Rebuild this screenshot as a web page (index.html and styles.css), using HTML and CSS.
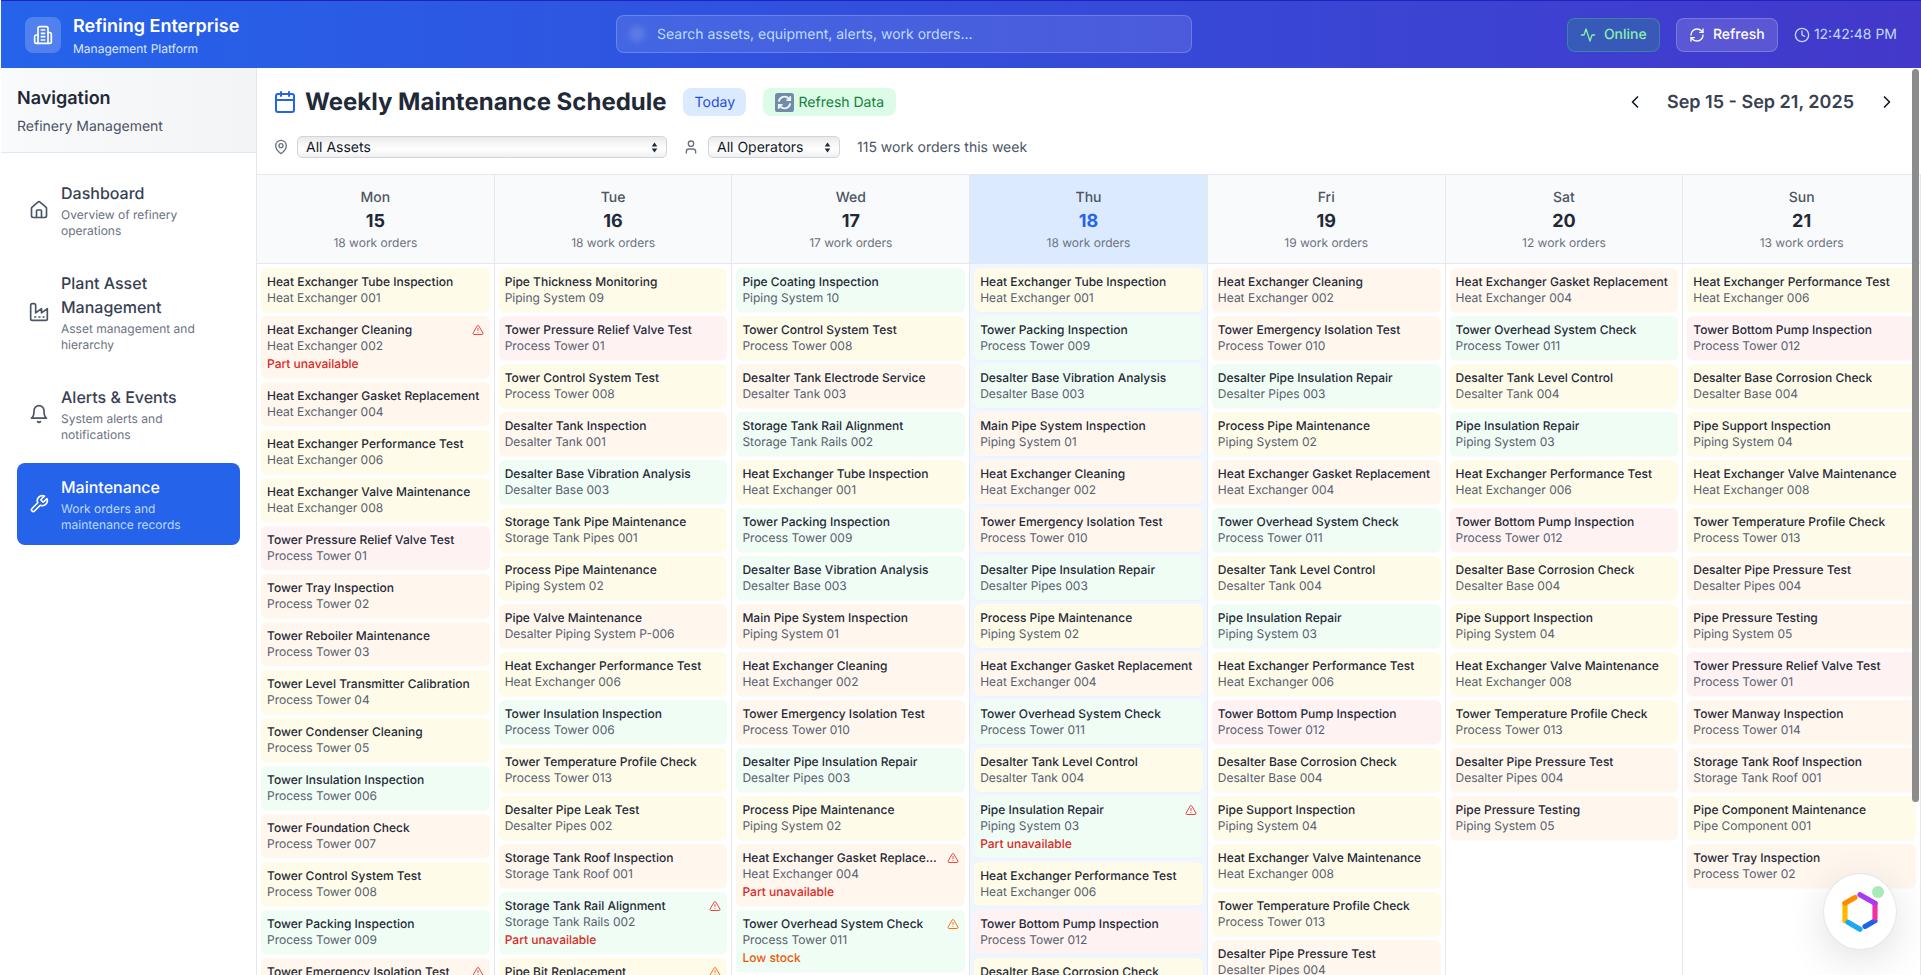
FILE: index.html
```html
<!DOCTYPE html>
<html lang="en">
<head>
<meta charset="utf-8">
<title>Weekly Maintenance Schedule</title>
<link rel="stylesheet" href="styles.css">
</head>
<body>
<svg class="defs" width="0" height="0" aria-hidden="true">
  <symbol id="i-alert" viewBox="0 0 24 24"><path d="m21.73 18-8-14a2 2 0 0 0-3.48 0l-8 14A2 2 0 0 0 4 21h16a2 2 0 0 0 1.73-3"/><path d="M12 9v4"/><path d="M12 17h.01"/></symbol>
  <symbol id="i-updown" viewBox="0 0 10 16"><path d="M5 1 9 6.5H1Z"/><path d="M5 15 1 9.5h8Z"/></symbol>
</svg>
<div class="app">
  <header class="topbar">
    <div class="brand">
      <div class="brand-icon">
        <svg class="ico i20" viewBox="0 0 24 24"><path d="M6 22V4a2 2 0 0 1 2-2h8a2 2 0 0 1 2 2v18Z"/><path d="M6 12H4a2 2 0 0 0-2 2v6a2 2 0 0 0 2 2h2"/><path d="M18 9h2a2 2 0 0 1 2 2v9a2 2 0 0 1-2 2h-2"/><path d="M10 6h4"/><path d="M10 10h4"/><path d="M10 14h4"/><path d="M10 18h4"/></svg>
      </div>
      <div>
        <div class="brand-title">Refining Enterprise</div>
        <div class="brand-sub">Management Platform</div>
      </div>
    </div>
    <div class="search">
      <span class="search-blob"></span>
      <span class="search-text">Search assets, equipment, alerts, work orders...</span>
    </div>
    <div class="top-actions">
      <div class="pill pill-online">
        <svg class="ico i16" viewBox="0 0 24 24"><path d="M22 12h-4l-3 9L9 3l-3 9H2"/></svg>
        <span>Online</span>
      </div>
      <div class="pill pill-refresh">
        <svg class="ico i16" viewBox="0 0 24 24"><path d="M3 12a9 9 0 0 1 9-9 9.75 9.75 0 0 1 6.74 2.74L21 8"/><path d="M21 3v5h-5"/><path d="M21 12a9 9 0 0 1-9 9 9.75 9.75 0 0 1-6.74-2.74L3 16"/><path d="M8 16H3v5"/></svg>
        <span>Refresh</span>
      </div>
      <div class="clock">
        <svg class="ico i16" viewBox="0 0 24 24"><circle cx="12" cy="12" r="10"/><polyline points="12 6 12 12 16 14"/></svg>
        <span>12:42:48 PM</span>
      </div>
    </div>
  </header>
  <div class="body">
    <aside class="sidebar">
      <div class="side-head">
        <div class="side-title">Navigation</div>
        <div class="side-sub">Refinery Management</div>
      </div>
      <nav class="nav">
        <a class="nav-item">
          <svg class="ico i20" viewBox="0 0 24 24"><path d="M15 21v-8a1 1 0 0 0-1-1h-4a1 1 0 0 0-1 1v8"/><path d="M3 10a2 2 0 0 1 .709-1.528l7-5.999a2 2 0 0 1 2.582 0l7 5.999A2 2 0 0 1 21 10v9a2 2 0 0 1-2 2H5a2 2 0 0 1-2-2z"/></svg>
          <div class="nav-text"><div class="nav-title">Dashboard</div><div class="nav-desc">Overview of refinery operations</div></div>
        </a>
        <a class="nav-item">
          <svg class="ico i20" viewBox="0 0 24 24"><path d="M2 20a2 2 0 0 0 2 2h16a2 2 0 0 0 2-2V8l-7 5V8l-7 5V4a2 2 0 0 0-2-2H4a2 2 0 0 0-2 2Z"/><path d="M17 18h1"/><path d="M12 18h1"/><path d="M7 18h1"/></svg>
          <div class="nav-text"><div class="nav-title">Plant Asset Management</div><div class="nav-desc">Asset management and hierarchy</div></div>
        </a>
        <a class="nav-item">
          <svg class="ico i20" viewBox="0 0 24 24"><path d="M6 8a6 6 0 0 1 12 0c0 7 3 9 3 9H3s3-2 3-9"/><path d="M10.3 21a1.94 1.94 0 0 0 3.4 0"/></svg>
          <div class="nav-text"><div class="nav-title">Alerts &amp; Events</div><div class="nav-desc">System alerts and notifications</div></div>
        </a>
        <a class="nav-item active">
          <svg class="ico i20" viewBox="0 0 24 24"><path d="M14.7 6.3a1 1 0 0 0 0 1.4l1.6 1.6a1 1 0 0 0 1.4 0l3.77-3.77a6 6 0 0 1-7.94 7.94l-6.91 6.91a2.12 2.12 0 0 1-3-3l6.91-6.91a6 6 0 0 1 7.94-7.94l-3.76 3.76z"/></svg>
          <div class="nav-text"><div class="nav-title">Maintenance</div><div class="nav-desc">Work orders and maintenance records</div></div>
        </a>
      </nav>
    </aside>
    <main class="main">
      <section class="toolbar">
        <div class="tool-row">
          <div class="tool-left">
            <svg class="ico cal" viewBox="0 0 24 24"><rect x="3" y="4" width="18" height="18" rx="2"/><path d="M16 2v4"/><path d="M8 2v4"/><path d="M3 10h18"/></svg>
            <h1 class="page-title">Weekly Maintenance Schedule</h1>
            <button class="chip chip-today">Today</button>
            <button class="chip chip-data">
              <svg class="emoji" viewBox="0 0 20 20"><rect width="20" height="20" rx="3" fill="#6f8ca8"/><path d="M4 9a6 6 0 0 1 10.5-3L16 7.5M16 3.5v4h-4M16 11a6 6 0 0 1-10.5 3L4 12.5M4 16.5v-4h4" fill="none" stroke="#f1f5f9" stroke-width="2"/></svg>
              <span>Refresh Data</span>
            </button>
          </div>
          <div class="week-nav">
            <svg class="ico chev" viewBox="0 0 24 24"><path d="m15 18-6-6 6-6"/></svg>
            <div class="week-label">Sep 15 - Sep 21, 2025</div>
            <svg class="ico chev" viewBox="0 0 24 24"><path d="m9 18 6-6-6-6"/></svg>
          </div>
        </div>
        <div class="filter-row">
          <svg class="ico filter-ico" viewBox="0 0 24 24"><path d="M20 10c0 6-8 12-8 12s-8-6-8-12a8 8 0 0 1 16 0Z"/><circle cx="12" cy="10" r="3"/></svg>
          <div class="select select-assets"><span>All Assets</span><svg class="updown"><use href="#i-updown"/></svg></div>
          <svg class="ico filter-ico op-ico" viewBox="0 0 24 24"><path d="M19 21v-2a4 4 0 0 0-4-4H9a4 4 0 0 0-4 4v2"/><circle cx="12" cy="7" r="4"/></svg>
          <div class="select select-ops"><span>All Operators</span><svg class="updown"><use href="#i-updown"/></svg></div>
          <div class="filter-count">115 work orders this week</div>
        </div>
      </section>

      <section class="week-head">
        <div class="day-head"><div class="day-name">Mon</div><div class="day-num">15</div><div class="day-count">18 work orders</div></div>
        <div class="day-head"><div class="day-name">Tue</div><div class="day-num">16</div><div class="day-count">18 work orders</div></div>
        <div class="day-head"><div class="day-name">Wed</div><div class="day-num">17</div><div class="day-count">17 work orders</div></div>
        <div class="day-head today"><div class="day-name">Thu</div><div class="day-num">18</div><div class="day-count">18 work orders</div></div>
        <div class="day-head"><div class="day-name">Fri</div><div class="day-num">19</div><div class="day-count">19 work orders</div></div>
        <div class="day-head"><div class="day-name">Sat</div><div class="day-num">20</div><div class="day-count">12 work orders</div></div>
        <div class="day-head"><div class="day-name">Sun</div><div class="day-num">21</div><div class="day-count">13 work orders</div></div>
      </section>

      <section class="week-grid">
        <div class="day-col">
          <div class="card y"><div class="card-title">Heat Exchanger Tube Inspection</div><div class="card-sub">Heat Exchanger 001</div></div>
          <div class="card o"><div class="card-top"><div class="card-title">Heat Exchanger Cleaning</div><svg class="warn red"><use href="#i-alert"/></svg></div><div class="card-sub">Heat Exchanger 002</div><div class="card-note red">Part unavailable</div></div>
          <div class="card o"><div class="card-title">Heat Exchanger Gasket Replacement</div><div class="card-sub">Heat Exchanger 004</div></div>
          <div class="card y"><div class="card-title">Heat Exchanger Performance Test</div><div class="card-sub">Heat Exchanger 006</div></div>
          <div class="card y"><div class="card-title">Heat Exchanger Valve Maintenance</div><div class="card-sub">Heat Exchanger 008</div></div>
          <div class="card r"><div class="card-title">Tower Pressure Relief Valve Test</div><div class="card-sub">Process Tower 01</div></div>
          <div class="card o"><div class="card-title">Tower Tray Inspection</div><div class="card-sub">Process Tower 02</div></div>
          <div class="card o"><div class="card-title">Tower Reboiler Maintenance</div><div class="card-sub">Process Tower 03</div></div>
          <div class="card y"><div class="card-title">Tower Level Transmitter Calibration</div><div class="card-sub">Process Tower 04</div></div>
          <div class="card y"><div class="card-title">Tower Condenser Cleaning</div><div class="card-sub">Process Tower 05</div></div>
          <div class="card g"><div class="card-title">Tower Insulation Inspection</div><div class="card-sub">Process Tower 006</div></div>
          <div class="card o"><div class="card-title">Tower Foundation Check</div><div class="card-sub">Process Tower 007</div></div>
          <div class="card y"><div class="card-title">Tower Control System Test</div><div class="card-sub">Process Tower 008</div></div>
          <div class="card g"><div class="card-title">Tower Packing Inspection</div><div class="card-sub">Process Tower 009</div></div>
          <div class="card o"><div class="card-top"><div class="card-title">Tower Emergency Isolation Test</div><svg class="warn red"><use href="#i-alert"/></svg></div></div>
        </div>
        <div class="day-col">
          <div class="card y"><div class="card-title">Pipe Thickness Monitoring</div><div class="card-sub">Piping System 09</div></div>
          <div class="card r"><div class="card-title">Tower Pressure Relief Valve Test</div><div class="card-sub">Process Tower 01</div></div>
          <div class="card y"><div class="card-title">Tower Control System Test</div><div class="card-sub">Process Tower 008</div></div>
          <div class="card o"><div class="card-title">Desalter Tank Inspection</div><div class="card-sub">Desalter Tank 001</div></div>
          <div class="card g"><div class="card-title">Desalter Base Vibration Analysis</div><div class="card-sub">Desalter Base 003</div></div>
          <div class="card y"><div class="card-title">Storage Tank Pipe Maintenance</div><div class="card-sub">Storage Tank Pipes 001</div></div>
          <div class="card y"><div class="card-title">Process Pipe Maintenance</div><div class="card-sub">Piping System 02</div></div>
          <div class="card o"><div class="card-title">Pipe Valve Maintenance</div><div class="card-sub">Desalter Piping System P-006</div></div>
          <div class="card y"><div class="card-title">Heat Exchanger Performance Test</div><div class="card-sub">Heat Exchanger 006</div></div>
          <div class="card g"><div class="card-title">Tower Insulation Inspection</div><div class="card-sub">Process Tower 006</div></div>
          <div class="card y"><div class="card-title">Tower Temperature Profile Check</div><div class="card-sub">Process Tower 013</div></div>
          <div class="card y"><div class="card-title">Desalter Pipe Leak Test</div><div class="card-sub">Desalter Pipes 002</div></div>
          <div class="card o"><div class="card-title">Storage Tank Roof Inspection</div><div class="card-sub">Storage Tank Roof 001</div></div>
          <div class="card g"><div class="card-top"><div class="card-title">Storage Tank Rail Alignment</div><svg class="warn red"><use href="#i-alert"/></svg></div><div class="card-sub">Storage Tank Rails 002</div><div class="card-note red">Part unavailable</div></div>
          <div class="card y"><div class="card-top"><div class="card-title">Pipe Bit Replacement</div><svg class="warn amber"><use href="#i-alert"/></svg></div></div>
        </div>
        <div class="day-col">
          <div class="card g"><div class="card-title">Pipe Coating Inspection</div><div class="card-sub">Piping System 10</div></div>
          <div class="card y"><div class="card-title">Tower Control System Test</div><div class="card-sub">Process Tower 008</div></div>
          <div class="card o"><div class="card-title">Desalter Tank Electrode Service</div><div class="card-sub">Desalter Tank 003</div></div>
          <div class="card g"><div class="card-title">Storage Tank Rail Alignment</div><div class="card-sub">Storage Tank Rails 002</div></div>
          <div class="card y"><div class="card-title">Heat Exchanger Tube Inspection</div><div class="card-sub">Heat Exchanger 001</div></div>
          <div class="card g"><div class="card-title">Tower Packing Inspection</div><div class="card-sub">Process Tower 009</div></div>
          <div class="card g"><div class="card-title">Desalter Base Vibration Analysis</div><div class="card-sub">Desalter Base 003</div></div>
          <div class="card o"><div class="card-title">Main Pipe System Inspection</div><div class="card-sub">Piping System 01</div></div>
          <div class="card o"><div class="card-title">Heat Exchanger Cleaning</div><div class="card-sub">Heat Exchanger 002</div></div>
          <div class="card o"><div class="card-title">Tower Emergency Isolation Test</div><div class="card-sub">Process Tower 010</div></div>
          <div class="card g"><div class="card-title">Desalter Pipe Insulation Repair</div><div class="card-sub">Desalter Pipes 003</div></div>
          <div class="card y"><div class="card-title">Process Pipe Maintenance</div><div class="card-sub">Piping System 02</div></div>
          <div class="card o"><div class="card-top"><div class="card-title">Heat Exchanger Gasket Replacement</div><svg class="warn red"><use href="#i-alert"/></svg></div><div class="card-sub">Heat Exchanger 004</div><div class="card-note red">Part unavailable</div></div>
          <div class="card g"><div class="card-top"><div class="card-title">Tower Overhead System Check</div><svg class="warn amber"><use href="#i-alert"/></svg></div><div class="card-sub">Process Tower 011</div><div class="card-note amber">Low stock</div></div>
        </div>
        <div class="day-col today">
          <div class="card y"><div class="card-title">Heat Exchanger Tube Inspection</div><div class="card-sub">Heat Exchanger 001</div></div>
          <div class="card g"><div class="card-title">Tower Packing Inspection</div><div class="card-sub">Process Tower 009</div></div>
          <div class="card g"><div class="card-title">Desalter Base Vibration Analysis</div><div class="card-sub">Desalter Base 003</div></div>
          <div class="card o"><div class="card-title">Main Pipe System Inspection</div><div class="card-sub">Piping System 01</div></div>
          <div class="card o"><div class="card-title">Heat Exchanger Cleaning</div><div class="card-sub">Heat Exchanger 002</div></div>
          <div class="card o"><div class="card-title">Tower Emergency Isolation Test</div><div class="card-sub">Process Tower 010</div></div>
          <div class="card g"><div class="card-title">Desalter Pipe Insulation Repair</div><div class="card-sub">Desalter Pipes 003</div></div>
          <div class="card y"><div class="card-title">Process Pipe Maintenance</div><div class="card-sub">Piping System 02</div></div>
          <div class="card o"><div class="card-title">Heat Exchanger Gasket Replacement</div><div class="card-sub">Heat Exchanger 004</div></div>
          <div class="card g"><div class="card-title">Tower Overhead System Check</div><div class="card-sub">Process Tower 011</div></div>
          <div class="card y"><div class="card-title">Desalter Tank Level Control</div><div class="card-sub">Desalter Tank 004</div></div>
          <div class="card g"><div class="card-top"><div class="card-title">Pipe Insulation Repair</div><svg class="warn red"><use href="#i-alert"/></svg></div><div class="card-sub">Piping System 03</div><div class="card-note red">Part unavailable</div></div>
          <div class="card y"><div class="card-title">Heat Exchanger Performance Test</div><div class="card-sub">Heat Exchanger 006</div></div>
          <div class="card r"><div class="card-title">Tower Bottom Pump Inspection</div><div class="card-sub">Process Tower 012</div></div>
          <div class="card y"><div class="card-title">Desalter Base Corrosion Check</div></div>
        </div>
        <div class="day-col">
          <div class="card o"><div class="card-title">Heat Exchanger Cleaning</div><div class="card-sub">Heat Exchanger 002</div></div>
          <div class="card o"><div class="card-title">Tower Emergency Isolation Test</div><div class="card-sub">Process Tower 010</div></div>
          <div class="card g"><div class="card-title">Desalter Pipe Insulation Repair</div><div class="card-sub">Desalter Pipes 003</div></div>
          <div class="card y"><div class="card-title">Process Pipe Maintenance</div><div class="card-sub">Piping System 02</div></div>
          <div class="card o"><div class="card-title">Heat Exchanger Gasket Replacement</div><div class="card-sub">Heat Exchanger 004</div></div>
          <div class="card g"><div class="card-title">Tower Overhead System Check</div><div class="card-sub">Process Tower 011</div></div>
          <div class="card y"><div class="card-title">Desalter Tank Level Control</div><div class="card-sub">Desalter Tank 004</div></div>
          <div class="card g"><div class="card-title">Pipe Insulation Repair</div><div class="card-sub">Piping System 03</div></div>
          <div class="card y"><div class="card-title">Heat Exchanger Performance Test</div><div class="card-sub">Heat Exchanger 006</div></div>
          <div class="card r"><div class="card-title">Tower Bottom Pump Inspection</div><div class="card-sub">Process Tower 012</div></div>
          <div class="card y"><div class="card-title">Desalter Base Corrosion Check</div><div class="card-sub">Desalter Base 004</div></div>
          <div class="card y"><div class="card-title">Pipe Support Inspection</div><div class="card-sub">Piping System 04</div></div>
          <div class="card y"><div class="card-title">Heat Exchanger Valve Maintenance</div><div class="card-sub">Heat Exchanger 008</div></div>
          <div class="card y"><div class="card-title">Tower Temperature Profile Check</div><div class="card-sub">Process Tower 013</div></div>
          <div class="card o"><div class="card-title">Desalter Pipe Pressure Test</div><div class="card-sub">Desalter Pipes 004</div></div>
        </div>
        <div class="day-col">
          <div class="card o"><div class="card-title">Heat Exchanger Gasket Replacement</div><div class="card-sub">Heat Exchanger 004</div></div>
          <div class="card g"><div class="card-title">Tower Overhead System Check</div><div class="card-sub">Process Tower 011</div></div>
          <div class="card y"><div class="card-title">Desalter Tank Level Control</div><div class="card-sub">Desalter Tank 004</div></div>
          <div class="card g"><div class="card-title">Pipe Insulation Repair</div><div class="card-sub">Piping System 03</div></div>
          <div class="card y"><div class="card-title">Heat Exchanger Performance Test</div><div class="card-sub">Heat Exchanger 006</div></div>
          <div class="card r"><div class="card-title">Tower Bottom Pump Inspection</div><div class="card-sub">Process Tower 012</div></div>
          <div class="card y"><div class="card-title">Desalter Base Corrosion Check</div><div class="card-sub">Desalter Base 004</div></div>
          <div class="card y"><div class="card-title">Pipe Support Inspection</div><div class="card-sub">Piping System 04</div></div>
          <div class="card y"><div class="card-title">Heat Exchanger Valve Maintenance</div><div class="card-sub">Heat Exchanger 008</div></div>
          <div class="card y"><div class="card-title">Tower Temperature Profile Check</div><div class="card-sub">Process Tower 013</div></div>
          <div class="card o"><div class="card-title">Desalter Pipe Pressure Test</div><div class="card-sub">Desalter Pipes 004</div></div>
          <div class="card o"><div class="card-title">Pipe Pressure Testing</div><div class="card-sub">Piping System 05</div></div>
        </div>
        <div class="day-col">
          <div class="card y"><div class="card-title">Heat Exchanger Performance Test</div><div class="card-sub">Heat Exchanger 006</div></div>
          <div class="card r"><div class="card-title">Tower Bottom Pump Inspection</div><div class="card-sub">Process Tower 012</div></div>
          <div class="card y"><div class="card-title">Desalter Base Corrosion Check</div><div class="card-sub">Desalter Base 004</div></div>
          <div class="card y"><div class="card-title">Pipe Support Inspection</div><div class="card-sub">Piping System 04</div></div>
          <div class="card y"><div class="card-title">Heat Exchanger Valve Maintenance</div><div class="card-sub">Heat Exchanger 008</div></div>
          <div class="card y"><div class="card-title">Tower Temperature Profile Check</div><div class="card-sub">Process Tower 013</div></div>
          <div class="card o"><div class="card-title">Desalter Pipe Pressure Test</div><div class="card-sub">Desalter Pipes 004</div></div>
          <div class="card o"><div class="card-title">Pipe Pressure Testing</div><div class="card-sub">Piping System 05</div></div>
          <div class="card r"><div class="card-title">Tower Pressure Relief Valve Test</div><div class="card-sub">Process Tower 01</div></div>
          <div class="card o"><div class="card-title">Tower Manway Inspection</div><div class="card-sub">Process Tower 014</div></div>
          <div class="card o"><div class="card-title">Storage Tank Roof Inspection</div><div class="card-sub">Storage Tank Roof 001</div></div>
          <div class="card y"><div class="card-title">Pipe Component Maintenance</div><div class="card-sub">Pipe Component 001</div></div>
          <div class="card o"><div class="card-title">Tower Tray Inspection</div><div class="card-sub">Process Tower 02</div></div>
        </div>
      </section>
      <div class="scroll-thumb"></div>
    </main>
  </div>
  <div class="widget">
    <svg class="hex" viewBox="0 0 40 40" fill="none" stroke-width="5.2" stroke-linecap="round">
      <path stroke="#ffb700" d="M5 28.7V11.3"/>
      <path stroke="#ff8a00" d="M5 11.3 15 5.6"/>
      <path stroke="#1aa7f5" d="M20 37.2 8 30.2"/>
      <path stroke="#1f62ea" d="M35 28.7 25 34.4"/>
      <path stroke="#f02fa8" d="M35 11.3V26"/>
      <path stroke="#a83bf0" d="M20 2.8 35 11.3"/>
    </svg>
    <span class="widget-dot"></span>
  </div>
</div>
</body>
</html>
```
FILE: styles.css
```css
* { box-sizing: border-box; }
html, body { margin: 0; height: 100%; overflow: hidden; background: #fff; }
body { font-family: Inter, "Liberation Sans", sans-serif; color: #1f2937; text-rendering: geometricPrecision; }
.defs { position: absolute; }
.ico { fill: none; stroke: currentColor; stroke-width: 2; stroke-linecap: round; stroke-linejoin: round; flex: none; display: block; }
.i16 { width: 16px; height: 16px; }
.i20 { width: 20px; height: 20px; }

.app { position: relative; height: 975px; margin-left: 1px; display: flex; flex-direction: column; overflow: hidden; }

.topbar { height: 68px; flex: none; display: flex; align-items: center; justify-content: space-between; padding: 0 24px; background: linear-gradient(90deg, #2563eb 0%, #4338ca 100%); border-top: 1px solid #1e22c0; }
.brand { display: flex; align-items: center; gap: 12px; width: 590px; }
.brand-icon { width: 36px; height: 36px; border-radius: 8px; background: rgba(255,255,255,.2); color: #fff; display: flex; align-items: center; justify-content: center; }
.brand-title { font-size: 18px; line-height: 28px; font-weight: 600; color: #fff; }
.brand-sub { font-size: 12px; line-height: 16px; color: #dbeafe; }

.search { position: absolute; left: 615px; top: 15px; width: 576px; height: 38px; display: flex; align-items: center; padding: 2px 0 0 40px; border: 1px solid rgba(255,255,255,.2); border-radius: 8px; background: rgba(255,255,255,.1); }
.search-blob { position: absolute; left: 12px; top: 10px; width: 16px; height: 16px; border-radius: 50%; background: rgba(255,255,255,.14); filter: blur(3px); }
.search-text { font-size: 14px; line-height: 20px; color: #bfdbfe; }

.top-actions { display: flex; align-items: center; }
.pill { height: 34px; display: flex; align-items: center; gap: 8px; border-radius: 8px; font-size: 14px; font-weight: 500; padding: 0 12px; }
.pill-online { width: 93px; background: rgba(34,197,94,.2); border: 1px solid rgba(74,222,128,.3); color: #86efac; }
.pill-refresh { width: 102px; margin-left: 16px; background: rgba(255,255,255,.14); border: 1px solid rgba(255,255,255,.2); color: #fff; }
.clock { margin-left: 16px; display: flex; align-items: center; gap: 4px; font-size: 14px; color: #bfdbfe; }

.body { flex: 1; min-height: 0; display: flex; }
.sidebar { width: 256px; flex: none; background: #fff; border-right: 1px solid #e5e7eb; }
.side-head { height: 85px; padding: 17px 16px 0; background: linear-gradient(90deg, #f9fafb, #f3f4f6); border-bottom: 1px solid #e5e7eb; }
.side-title { font-size: 18px; line-height: 28px; font-weight: 600; color: #1f2937; }
.side-sub { margin-top: 4px; font-size: 14px; line-height: 20px; color: #4b5563; }
.nav { padding: 16px; display: flex; flex-direction: column; gap: 8px; }
.nav-item { display: flex; align-items: center; gap: 12px; padding: 12px; border-radius: 8px; color: #4b5563; min-height: 82px; }
.nav-text { min-width: 0; flex: 1; }
.nav-title { font-size: 16px; line-height: 24px; font-weight: 500; color: #374151; }
.nav-desc { margin-top: 2px; font-size: 12px; line-height: 16px; color: #6b7280; }
.nav-item.active { background: #2563eb; color: #fff; }
.nav-item.active .nav-title { color: #fff; }
.nav-item.active .nav-desc { color: #bfdbfe; }

.main { position: relative; width: 1664px; flex: none; display: flex; flex-direction: column; overflow: hidden; background: #fff; }
.toolbar { height: 107px; flex: none; padding: 16px 16px 0 16px; border-bottom: 1px solid #e5e7eb; }
.tool-row { height: 36px; display: flex; align-items: center; justify-content: space-between; }
.tool-left { display: flex; align-items: center; }
.cal { width: 24px; height: 24px; color: #2563eb; }
.page-title { margin: 0 0 0 8px; font-size: 24px; line-height: 32px; font-weight: 700; color: #1f2937; }
.chip { height: 28px; border: 0; border-radius: 8px; font-family: inherit; font-size: 14px; display: flex; align-items: center; padding: 0 12px; text-rendering: inherit; white-space: nowrap; }
.chip-today { margin-left: 16px; width: 63px; background: #dbeafe; color: #1d4ed8; }
.chip-data { margin-left: 17px; width: 133px; gap: 5px; padding-right: 6px; background: #dcfce7; color: #15803d; }
.emoji { width: 19px; height: 19px; flex: none; }
.week-nav { display: flex; align-items: center; padding-right: 8px; }
.chev { width: 20px; height: 20px; color: #111827; }
.week-label { margin: 0 24px 0 22px; padding-top: 1px; font-size: 18px; line-height: 28px; font-weight: 600; color: #374151; width: 186px; white-space: nowrap; }

.filter-row { margin-top: 15px; height: 24px; display: flex; align-items: center; font-size: 14px; }
.filter-ico { width: 16px; height: 16px; color: #6b7280; }
.op-ico { margin-left: 16px; }
.select { height: 22px; margin-left: 8px; padding: 0 8px; display: flex; align-items: center; justify-content: space-between; border: 1px solid #d1d5db; border-radius: 5px; background: linear-gradient(180deg, #e9e9e9 0%, #f7f7f7 35%, #fff 60%, #f0f0f0 100%); color: #111827; }
.select-assets { width: 370px; }
.select-ops { width: 132px; margin-left: 9px; }
.updown { width: 7px; height: 13px; fill: #1f2937; }
.filter-count { margin-left: 17px; color: #4b5563; }

.week-head, .week-grid { display: grid; grid-template-columns: repeat(7, minmax(0, 1fr)); }
.week-head { height: 89px; flex: none; border-bottom: 1px solid #e5e7eb; }
.day-head { padding-top: 13px; text-align: center; background: #f9fafb; border-right: 1px solid #e5e7eb; }
.day-name { font-size: 14px; line-height: 20px; font-weight: 500; color: #4b5563; }
.day-num { font-size: 18px; line-height: 28px; font-weight: 700; color: #1f2937; }
.day-count { margin-top: -1px; font-size: 12px; line-height: 16px; color: #6b7280; }
.day-head.today { background: #dbeafe; }
.day-head.today .day-num { color: #2563eb; }

.week-grid { flex: 1; min-height: 0; overflow: hidden; }
.day-col { min-width: 0; padding: 4px; display: flex; flex-direction: column; gap: 4px; border-right: 1px solid #e5e7eb; }
.day-col.today { background: #eff6ff; }
.card { flex: none; padding: 6px; border-radius: 6px; font-size: 12px; line-height: 16px; box-shadow: 0 1px 1px rgba(0,0,0,.02); }
.card.y { background: #fefce8; }
.card.o { background: #fff7ed; }
.card.r { background: #fef2f2; }
.card.g { background: #f0fdf4; }
.card-top { display: flex; align-items: flex-start; justify-content: space-between; gap: 8px; }
.card-title { min-width: 0; font-weight: 500; color: #1f2937; white-space: nowrap; overflow: hidden; text-overflow: ellipsis; }
.card-sub { color: #56606e; white-space: nowrap; overflow: hidden; text-overflow: ellipsis; }
.card-note { margin-top: 2px; font-weight: 500; }
.card-note.red { color: #dc2626; }
.card-note.amber { color: #ea580c; }
.warn { width: 12px; height: 12px; flex: none; margin-top: 2px; fill: none; stroke-width: 2; stroke-linecap: round; stroke-linejoin: round; }
.warn.red { stroke: #ef4444; }
.warn.amber { stroke: #f97316; }

.scroll-thumb { position: absolute; left: 1655px; top: 1px; width: 7px; height: 733px; border-radius: 4px; background: #8c8c8c; }

.widget { position: absolute; left: 1822px; top: 873px; width: 74px; height: 77px; border-radius: 50%; background: #fff; border: 1px solid #e5e7eb; box-shadow: 0 10px 40px rgba(0,0,0,.12); display: flex; align-items: center; justify-content: center; }
.hex { width: 40px; height: 40px; }
.widget-dot { position: absolute; left: 48px; top: 12px; width: 12px; height: 12px; border-radius: 50%; background: #a7ecb8; }
```
